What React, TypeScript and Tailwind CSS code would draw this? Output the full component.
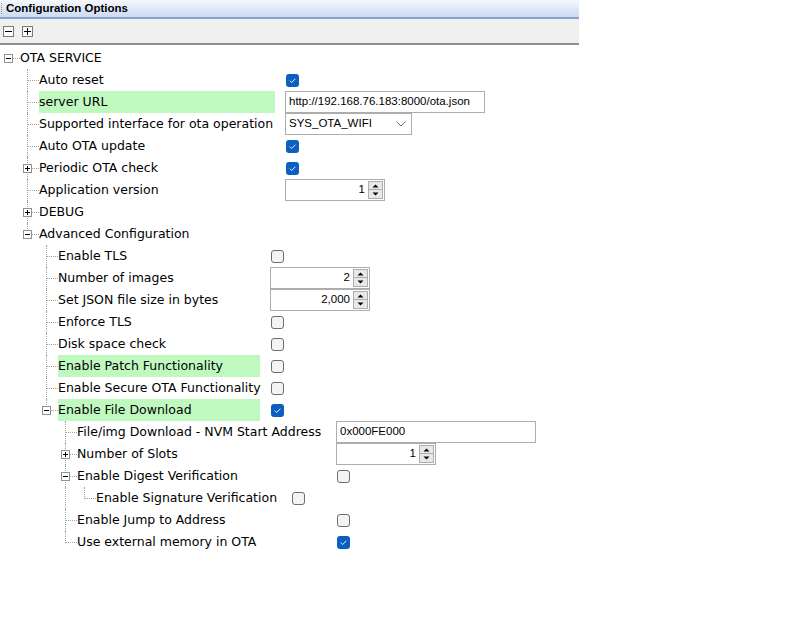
import React from "react";

type Val =
	| { kind: "check"; on: boolean }
	| { kind: "text"; text: string; w: string }
	| { kind: "select"; text: string; w: string }
	| { kind: "spin"; text: string; w: string };

interface Node {
	label: string;
	value?: Val;
	hl?: boolean;
	open?: boolean;
	closed?: boolean;
	childW?: string;
	children?: Node[];
}

interface Row {
	node: Node;
	depth: number;
	trail: boolean[];
	last: boolean;
	labelW: string;
}

const tree: Node = {
	label: "OTA SERVICE",
	open: true,
	childW: "w-[236px]",
	children: [
		{ label: "Auto reset", value: { kind: "check", on: true } },
		{
			label: "server URL",
			hl: true,
			value: { kind: "text", text: "http://192.168.76.183:8000/ota.json", w: "w-[200px]" },
		},
		{
			label: "Supported interface for ota operation",
			value: { kind: "select", text: "SYS_OTA_WIFI", w: "w-[127px]" },
		},
		{ label: "Auto OTA update", value: { kind: "check", on: true } },
		{ label: "Periodic OTA check", closed: true, value: { kind: "check", on: true } },
		{ label: "Application version", value: { kind: "spin", text: "1", w: "w-[100px]" } },
		{ label: "DEBUG", closed: true },
		{
			label: "Advanced Configuration",
			open: true,
			childW: "w-[202px]",
			children: [
				{ label: "Enable TLS", value: { kind: "check", on: false } },
				{ label: "Number of images", value: { kind: "spin", text: "2", w: "w-[100px]" } },
				{
					label: "Set JSON file size in bytes",
					value: { kind: "spin", text: "2,000", w: "w-[100px]" },
				},
				{ label: "Enforce TLS", value: { kind: "check", on: false } },
				{ label: "Disk space check", value: { kind: "check", on: false } },
				{ label: "Enable Patch Functionality", hl: true, value: { kind: "check", on: false } },
				{ label: "Enable Secure OTA Functionality", value: { kind: "check", on: false } },
				{
					label: "Enable File Download",
					hl: true,
					open: true,
					childW: "w-[249px]",
					value: { kind: "check", on: true },
					children: [
						{
							label: "File/img Download - NVM Start Address",
							value: { kind: "text", text: "0x000FE000", w: "w-[200px]" },
						},
						{
							label: "Number of Slots",
							closed: true,
							value: { kind: "spin", text: "1", w: "w-[100px]" },
						},
						{
							label: "Enable Digest Verification",
							open: true,
							childW: "w-[185px]",
							value: { kind: "check", on: false },
							children: [
								{
									label: "Enable Signature Verification",
									value: { kind: "check", on: false },
								},
							],
						},
						{ label: "Enable Jump to Address", value: { kind: "check", on: false } },
						{ label: "Use external memory in OTA", value: { kind: "check", on: true } },
					],
				},
			],
		},
	],
};

function flatten(nodes: Node[], depth: number, trail: boolean[], labelW: string, out: Row[]) {
	nodes.forEach((n, i) => {
		const last = i === nodes.length - 1;
		out.push({ node: n, depth, trail, last, labelW });
		if (n.open && n.children) {
			flatten(n.children, depth + 1, [...trail, !last], n.childW || "", out);
		}
	});
	return out;
}

function Expander({ open }: { open: boolean }) {
	return (
		<span className="absolute left-[3px] top-[7px] z-10 block h-[9px] w-[9px] border border-[#919191] bg-white">
			<span className="absolute left-[1px] top-[3px] block h-[1px] w-[5px] bg-black" />
			{!open && <span className="absolute left-[3px] top-[1px] block h-[5px] w-[1px] bg-black" />}
		</span>
	);
}

function Check({ on }: { on: boolean }) {
	if (on) {
		return (
			<span className="ml-[1px] flex h-[13px] w-[13px] items-center justify-center rounded-[3px] bg-[#0a5fc0]">
				<svg width="9" height="9" viewBox="0 0 9 9">
					<path d="M1.8 4.6 L3.7 6.5 L7.4 2.7" fill="none" stroke="#e6f0fb" strokeWidth="1" />
				</svg>
			</span>
		);
	}
	return <span className="ml-[1px] block h-[13px] w-[13px] rounded-[3px] border border-[#6e6e6e] bg-[#f4f4f4]" />;
}

function Spin({ text, w }: { text: string; w: string }) {
	return (
		<div className={`flex h-[22px] items-center border border-[#adadad] bg-white ${w}`}>
			<span className="flex-1 pr-[3px] text-right">{text}</span>
			<div className="mr-[1px] flex h-[18px] w-[15px] flex-col">
				<span className="flex h-[9px] items-center justify-center border border-[#adadad] bg-[#e8e8e8]">
					<svg width="7" height="4" viewBox="0 0 7 4">
						<path d="M0.5 3.5 L3.5 0.5 L6.5 3.5 Z" fill="#000" />
					</svg>
				</span>
				<span className="flex h-[9px] items-center justify-center border border-t-0 border-[#adadad] bg-[#e8e8e8]">
					<svg width="7" height="4" viewBox="0 0 7 4">
						<path d="M0.5 0.5 L6.5 0.5 L3.5 3.5 Z" fill="#000" />
					</svg>
				</span>
			</div>
		</div>
	);
}

function Value({ v }: { v: Val }) {
	if (v.kind === "check") return <Check on={v.on} />;
	if (v.kind === "spin") return <Spin text={v.text} w={v.w} />;
	if (v.kind === "select") {
		return (
			<div className={`flex h-[22px] items-center justify-between border border-[#adadad] bg-white pl-[3px] pr-[5px] ${v.w}`}>
				<span>{v.text}</span>
				<svg width="10" height="6" viewBox="0 0 10 6">
					<path d="M0.5 0.5 L5 5 L9.5 0.5" fill="none" stroke="#707070" strokeWidth="1" />
				</svg>
			</div>
		);
	}
	return (
		<div className={`flex h-[22px] items-center border border-[#adadad] bg-white pl-[3px] ${v.w}`}>
			{v.text}
		</div>
	);
}

function TreeRow({ row }: { row: Row }) {
	const { node, depth, trail, last, labelW } = row;
	const hasKids = node.open || node.closed;

	return (
		<div className="flex h-[22px] items-center">
			{trail.map((cont, k) => (
				<div key={k} className="relative h-full w-[19px] shrink-0">
					{cont && <span className="absolute left-[7px] top-0 h-full border-l border-dotted border-[#a0a0a0]" />}
				</div>
			))}

			<div className="relative h-full w-[19px] shrink-0">
				{depth > 0 && (
					<span
						className={`absolute left-[7px] top-0 border-l border-dotted border-[#a0a0a0] ${
							last ? "h-[12px]" : "h-full"
						}`}
					/>
				)}
				<span className="absolute left-[8px] right-0 top-[11px] border-t border-dotted border-[#a0a0a0]" />
				{hasKids && <Expander open={!!node.open} />}
			</div>

			<div
				className={`flex h-full shrink-0 items-center whitespace-nowrap ${labelW} ${
					node.hl ? "bg-[#c0f9c0]" : ""
				}`}
			>
				{node.label}
			</div>

			{node.value && (
				<div className="ml-[10px] flex items-center font-['Liberation_Sans',sans-serif] text-[11.5px]">
					<Value v={node.value} />
				</div>
			)}
		</div>
	);
}

export default function App() {
	const rows = flatten([tree], 0, [], "", []);

	return (
		<div className="min-h-screen bg-white text-black">
			<div className="w-[579px]">
				{/* HEADER */}
				<div className="flex h-[19px] items-center border-b-2 border-[#86a3c9] bg-gradient-to-b from-[#f6f8fd] to-[#ccdaf2]">
					<div className="ml-[1px] flex h-[12px] w-[2px] flex-col justify-between">
						{[0, 1, 2, 3, 4, 5].map((i) => (
							<span key={i} className="block h-[1px] w-[1px] bg-[#8c8c8c]" />
						))}
					</div>
					<span className="ml-[3px] font-['Liberation_Sans',sans-serif] text-[11.5px] font-bold">
						Configuration Options
					</span>
				</div>

				{/* TOOLBAR */}
				<div className="flex h-[26px] items-center gap-[8px] border-b-2 border-[#8e8e8e] bg-[#f0f0f0] pl-[3px]">
					<span className="relative block h-[11px] w-[11px] border border-[#7a7a7a] bg-[#fbfbfb]">
						<span className="absolute left-[1px] top-[4px] block h-[1px] w-[7px] bg-black" />
					</span>
					<span className="relative block h-[11px] w-[11px] border border-[#7a7a7a] bg-[#fbfbfb]">
						<span className="absolute left-[1px] top-[4px] block h-[1px] w-[7px] bg-black" />
						<span className="absolute left-[4px] top-[1px] block h-[7px] w-[1px] bg-black" />
					</span>
				</div>

				{/* TREE */}
				<div className="pl-[1px] pt-[2px] font-['DejaVu_Sans',sans-serif] text-[12.5px]">
					{rows.map((row, i) => (
						<TreeRow key={i} row={row} />
					))}
				</div>
			</div>
		</div>
	);
}
